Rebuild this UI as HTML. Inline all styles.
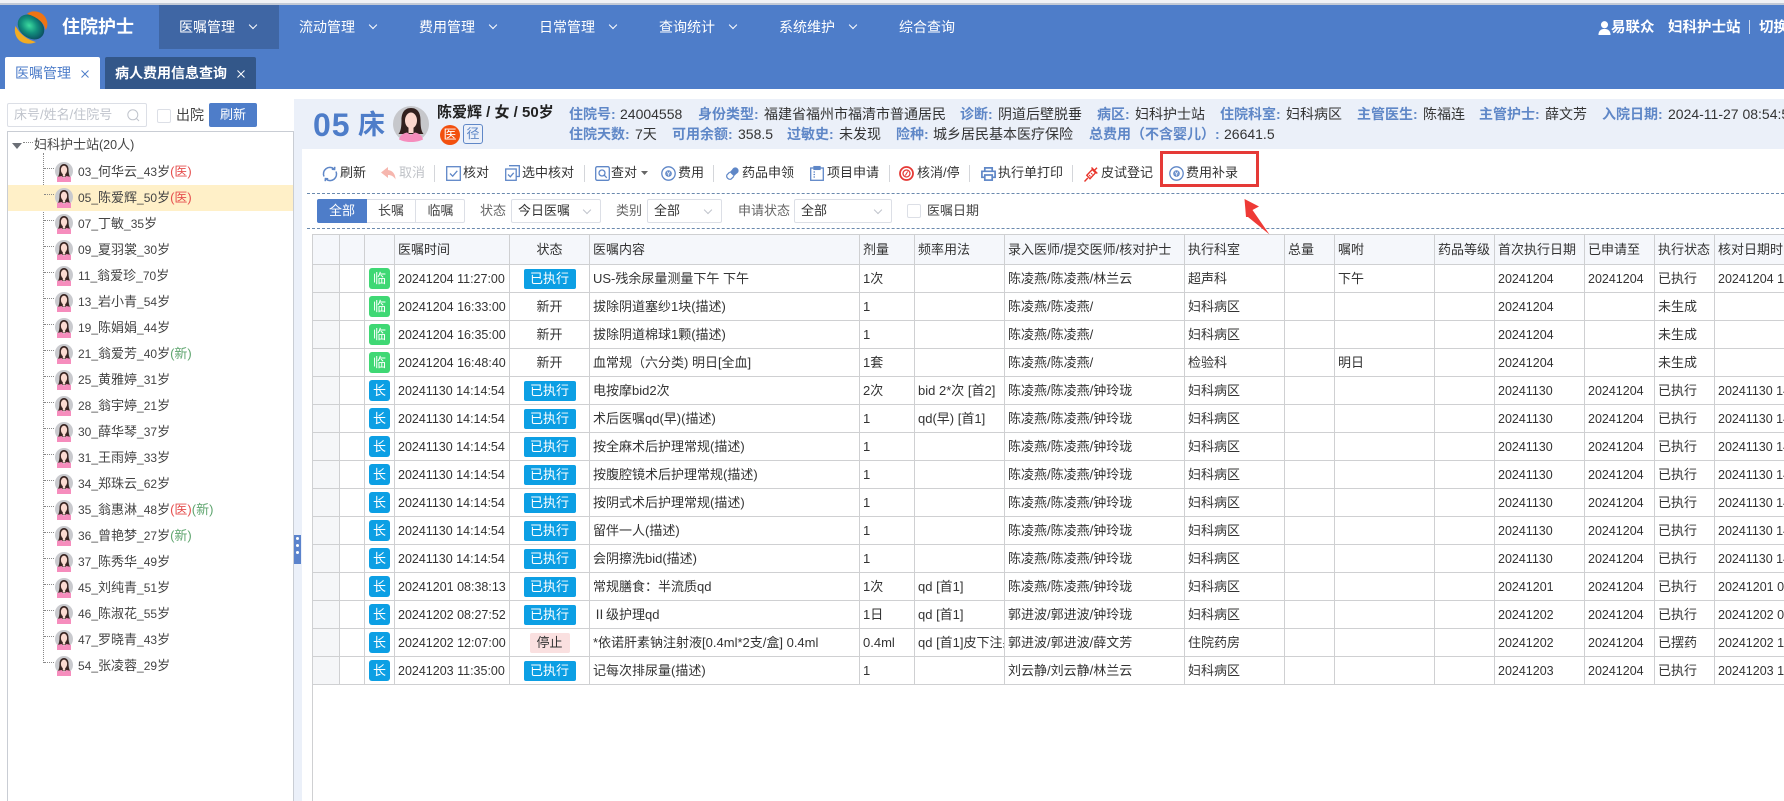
<!DOCTYPE html>
<html lang="zh-CN">
<head>
<meta charset="utf-8">
<title>住院护士</title>
<style>
*{box-sizing:border-box}
html,body{margin:0;padding:0;width:1784px;height:801px;overflow:hidden;background:#fff}
body{font-family:"Liberation Sans","Noto Sans CJK SC",sans-serif;font-size:13px;color:#333;position:relative}
i{font-style:normal}
.a{position:absolute;white-space:nowrap;line-height:20px;height:20px}
.box{position:absolute}
svg{position:absolute;overflow:visible}
.m{color:#fff;font-size:14px;top:17px}
.c{position:absolute;width:6px;height:6px;border-right:1px solid #fff;border-bottom:1px solid #fff;transform:rotate(45deg);top:22px}
.lb{color:#5f87c7;font-weight:bold;font-size:14px}
.v{color:#333;font-size:14px}
.t{color:#333;font-size:13px;top:163px}
.sep{position:absolute;top:165px;height:17px;width:1px;background:#d4d6da}
.sel{position:absolute;top:199px;height:24px;border:1px solid #dcdfe6;border-radius:2px;background:#fff}
.sc{position:absolute;width:6px;height:6px;border-right:1px solid #c0c4cc;border-bottom:1px solid #c0c4cc;transform:rotate(45deg);top:207px}
.g{color:#666;top:201px}
.tree{position:absolute;left:8px;top:159px;width:285px}
.r{height:26px;line-height:26px;padding-left:70px;position:relative;white-space:nowrap;color:#444;font-size:13px}
.r svg{left:47px;top:3px;width:18px;height:20px}
.r:before{content:"";position:absolute;left:36px;width:10px;top:9px;border-top:1px dotted #888}
.r i{font-size:12px}
.hl{background:#fff0c8}
.y{color:#e6504f}
.w{color:#5fa56f}
table{position:absolute;left:312px;top:234px;border-collapse:collapse;table-layout:fixed;width:1522px}
td,th{border:1px solid #cfd0d2;padding:0 0 0 3px;white-space:nowrap;overflow:hidden;font-weight:normal;text-align:left;color:#333;font-size:13px;height:28px;line-height:20px}
thead th{height:30px;background:#f5f7fb}
td.f{background:#f5f6f8}
td.ct,th.ct{text-align:center;padding:0}
td.n{font-size:12.5px}
.tag{display:inline-block;width:21px;height:21px;line-height:21px;border-radius:3px;color:#fff;text-align:center;vertical-align:middle;font-size:13px}
.l{background:#3fd874}
.k{background:#0c9fe4}
.st{display:inline-block;height:20px;line-height:20px;border-radius:2px;text-align:center;vertical-align:middle;font-size:13px}
.e{width:52px;background:#0c9fe4;color:#fff}
.p{width:40px;background:#fae0e0;color:#333}
</style>
</head>
<body>
<svg width="0" height="0" style="position:absolute">
<defs>
<radialGradient id="gs" cx="42%" cy="50%" r="60%"><stop offset="0" stop-color="#3ddc9f"/><stop offset=".5" stop-color="#128f7c"/><stop offset="1" stop-color="#0b4a60"/></radialGradient>
<symbol id="av" viewBox="0 0 18 20">
<circle cx="9" cy="9" r="9" fill="#c9cace"/>
<path d="M9 2C6 2 4.500 4.500 4.500 7.500C4.500 10.500 4 13 3 15L15 15C14 13 13.500 10.500 13.500 7.500C13.500 4.500 12 2 9 2Z" fill="#3a2623"/>
<ellipse cx="9" cy="8" rx="3.100" ry="4.400" fill="#fbdad1"/>
<rect x="7.800" y="11" width="2.400" height="3.500" fill="#fbdad1"/>
<path d="M2 15L6.500 14L9 16L11.500 14L16 15L16 20L2 20Z" fill="#f68dbd"/>
</symbol>
</defs>
</svg>

<!-- top strip and header -->
<div class="box" style="left:0;top:0;width:1784px;height:4px;background:#f1f2f5"></div>
<div class="box" style="left:0;top:3px;width:1784px;height:2px;background:#c3cad6"></div>
<div class="box" style="left:0;top:5px;width:1784px;height:84px;background:#4e7dc9"></div>
<div class="box" style="left:159px;top:5px;width:120px;height:44px;background:#3f66a4"></div>

<!-- logo -->
<svg style="left:14px;top:10px" width="34" height="34" viewBox="0 0 34 34">
<ellipse cx="17" cy="17" rx="14.500" ry="11" fill="url(#gs)" transform="rotate(38 17 17)"/>
<path d="M13 4C17 -.5 30 0 33 11C34 15 33 18 31.500 20C31 14 24 7 13 4Z" fill="#ee7414"/>
<path d="M1.500 16C-1 24 4 33 13 33.500C17 34 20 33 22 32C15 30 7 26 1.500 16Z" fill="#f2ac24"/>
</svg>
<span class="a" style="left:62px;top:17px;color:#fff;font-size:18px;font-weight:bold">住院护士</span>

<!-- menu -->
<span class="a m" style="left:179px">医嘱管理</span><span class="c" style="left:250px"></span>
<span class="a m" style="left:299px">流动管理</span><span class="c" style="left:370px"></span>
<span class="a m" style="left:419px">费用管理</span><span class="c" style="left:490px"></span>
<span class="a m" style="left:539px">日常管理</span><span class="c" style="left:610px"></span>
<span class="a m" style="left:659px">查询统计</span><span class="c" style="left:730px"></span>
<span class="a m" style="left:779px">系统维护</span><span class="c" style="left:850px"></span>
<span class="a m" style="left:899px">综合查询</span>

<!-- user -->
<svg style="left:1598px;top:21px" width="13" height="14" viewBox="0 0 13 15"><circle cx="6.500" cy="4" r="3.800" fill="#fff"/><path d="M0 15C0 10.500 3 8.500 6.500 8.500C10 8.500 13 10.500 13 15Z" fill="#fff"/></svg>
<span class="a" style="left:1611px;top:18px;color:#fff;font-size:14.500px;font-weight:bold">易联众</span>
<span class="a" style="left:1668px;top:18px;color:#fff;font-size:14.500px;font-weight:bold">妇科护士站</span>
<div class="box" style="left:1749px;top:20px;width:1px;height:14px;background:#cfdcf0"></div>
<span class="a" style="left:1759px;top:18px;color:#fff;font-size:14.500px;font-weight:bold">切换</span>

<!-- tabs -->
<div class="box" style="left:5px;top:57px;width:95px;height:32px;background:#fff;border-radius:2px 2px 0 0"></div>
<span class="a" style="left:15px;top:63px;color:#4e7dc9;font-size:14px">医嘱管理</span>
<svg style="left:81px;top:70px" width="8" height="8" viewBox="0 0 8 8"><path d="M.5 .5L7.500 7.500M7.500 .5L.5 7.500" stroke="#4e7dc9" stroke-width="1" fill="none"/></svg>
<div class="box" style="left:105px;top:57px;width:151px;height:32px;background:#335789;border-radius:2px 2px 0 0"></div>
<span class="a" style="left:115px;top:63px;color:#fff;font-size:14px;font-weight:bold">病人费用信息查询</span>
<svg style="left:237px;top:70px" width="8" height="8" viewBox="0 0 8 8"><path d="M.5 .5L7.500 7.500M7.500 .5L.5 7.500" stroke="#fff" stroke-width="1" fill="none"/></svg>

<!-- sidebar top -->
<div class="box" style="left:7px;top:103px;width:140px;height:24px;border:1px solid #dcdfe6;border-radius:2px"></div>
<span class="a" style="left:14px;top:105px;color:#c0c4cc;font-size:13px">床号/姓名/住院号</span>
<svg style="left:127px;top:109px" width="13" height="13" viewBox="0 0 13 13"><circle cx="5.800" cy="5.800" r="5" fill="none" stroke="#c0c4cc"/><path d="M9.500 9.500L12 12" stroke="#c0c4cc"/></svg>
<div class="box" style="left:157px;top:109px;width:14px;height:14px;border:1px solid #dcdfe6;border-radius:2px"></div>
<span class="a" style="left:176px;top:105px;font-size:14px;color:#444">出院</span>
<div class="box" style="left:209px;top:103px;width:48px;height:24px;background:#4e7dc9;border-radius:2px;color:#fff;text-align:center;line-height:23px;font-size:13px">刷新</div>

<!-- tree box -->
<div class="box" style="left:7px;top:131px;width:287px;height:680px;border:1px solid #c9cdd4"></div>
<svg style="left:12px;top:143px" width="10" height="6" viewBox="0 0 10 6"><path d="M0 0L10 0L5 6Z" fill="#6b6f76"/></svg>
<div class="box" style="left:23px;top:142px;width:10px;border-top:1px dotted #888"></div>
<span class="a" style="left:34px;top:135px;color:#444;font-size:13px">妇科护士站<i style="font-size:12.5px">(20</i>人<i style="font-size:12.5px">)</i></span>
<div class="box" style="left:43px;top:153px;height:510px;border-left:1px dotted #888"></div>

<div class="tree">
<div class="r"><svg><use href="#av"/></svg><i>03_</i>何华云<i>_43</i>岁<span class="y">(医)</span></div>
<div class="r hl"><svg><use href="#av"/></svg><i>05_</i>陈爱辉<i>_50</i>岁<span class="y">(医)</span></div>
<div class="r"><svg><use href="#av"/></svg><i>07_</i>丁敏<i>_35</i>岁</div>
<div class="r"><svg><use href="#av"/></svg><i>09_</i>夏羽裳<i>_30</i>岁</div>
<div class="r"><svg><use href="#av"/></svg><i>11_</i>翁爱珍<i>_70</i>岁</div>
<div class="r"><svg><use href="#av"/></svg><i>13_</i>岩小青<i>_54</i>岁</div>
<div class="r"><svg><use href="#av"/></svg><i>19_</i>陈娟娟<i>_44</i>岁</div>
<div class="r"><svg><use href="#av"/></svg><i>21_</i>翁爱芳<i>_40</i>岁<span class="w">(新)</span></div>
<div class="r"><svg><use href="#av"/></svg><i>25_</i>黄雅婷<i>_31</i>岁</div>
<div class="r"><svg><use href="#av"/></svg><i>28_</i>翁宇婷<i>_21</i>岁</div>
<div class="r"><svg><use href="#av"/></svg><i>30_</i>薛华琴<i>_37</i>岁</div>
<div class="r"><svg><use href="#av"/></svg><i>31_</i>王雨婷<i>_33</i>岁</div>
<div class="r"><svg><use href="#av"/></svg><i>34_</i>郑珠云<i>_62</i>岁</div>
<div class="r"><svg><use href="#av"/></svg><i>35_</i>翁惠淋<i>_48</i>岁<span class="y">(医)</span><span class="w">(新)</span></div>
<div class="r"><svg><use href="#av"/></svg><i>36_</i>曾艳梦<i>_27</i>岁<span class="w">(新)</span></div>
<div class="r"><svg><use href="#av"/></svg><i>37_</i>陈秀华<i>_49</i>岁</div>
<div class="r"><svg><use href="#av"/></svg><i>45_</i>刘纯青<i>_51</i>岁</div>
<div class="r"><svg><use href="#av"/></svg><i>46_</i>陈淑花<i>_55</i>岁</div>
<div class="r"><svg><use href="#av"/></svg><i>47_</i>罗晓青<i>_43</i>岁</div>
<div class="r"><svg><use href="#av"/></svg><i>54_</i>张凌蓉<i>_29</i>岁</div>
</div>

<!-- splitter -->
<div class="box" style="left:294px;top:99px;width:8px;height:702px;background:#ebf0f9"></div>
<div class="box" style="left:294px;top:535px;width:7px;height:29px;background:#5b83cc"></div>
<div class="box" style="left:296px;top:537px;width:3px;height:3px;border-radius:50%;background:#fff"></div>
<div class="box" style="left:296px;top:544px;width:3px;height:3px;border-radius:50%;background:#fff"></div>
<div class="box" style="left:296px;top:551px;width:3px;height:3px;border-radius:50%;background:#fff"></div>

<!-- patient header -->
<div class="box" style="left:302px;top:99px;width:1482px;height:50px;background:#ebf0f9"></div>
<span class="a" style="left:313px;top:110px;height:30px;line-height:30px;color:#4e7dc9;font-size:32px;font-weight:bold;letter-spacing:1px">05</span>
<span class="a" style="left:358px;top:110px;height:30px;line-height:30px;color:#4e7dc9;font-size:27px;font-weight:bold">床</span>
<svg style="left:393px;top:106px" width="36" height="36" viewBox="0 0 36 36">
<circle cx="18" cy="18" r="18" fill="#c6c7cb"/>
<path d="M18 2C11 2 8.500 7.500 8.500 14C8.500 20 8 25 5.500 28L30.500 28C28 25 27.500 20 27.500 14C27.500 7.500 25 2 18 2Z" fill="#32201e"/>
<ellipse cx="18" cy="14.500" rx="6" ry="8" fill="#fcd6cd"/>
<rect x="15.500" y="20" width="5" height="7" fill="#fcd6cd"/>
<path d="M6 33.500C7 29 10 27.500 14 26.500L18 29L22 26.500C26 27.500 29 29 30 33.500C27 35 22.500 36 18 36C13.500 36 9 35 6 33.500Z" fill="#f68dbd"/>
</svg>
<span class="a" style="left:437px;top:103px;font-size:15px;font-weight:bold;color:#222">陈爱辉 / 女 / 50岁</span>
<div class="box" style="left:440px;top:125px;width:20px;height:20px;border-radius:50%;background:#f2500f;color:#fff;text-align:center;line-height:19px;font-size:13px">医</div>
<div class="box" style="left:463px;top:124px;width:20px;height:20px;border:1px solid #5f87c7;border-radius:3px;color:#5f87c7;text-align:center;line-height:18px;font-size:13px">径</div>

<span class="a lb" style="left:569px;top:104px">住院号:</span><span class="a v" style="left:620px;top:104px">24004558</span>
<span class="a lb" style="left:698px;top:104px">身份类型:</span><span class="a v" style="left:764px;top:104px">福建省福州市福清市普通居民</span>
<span class="a lb" style="left:960px;top:104px">诊断:</span><span class="a v" style="left:998px;top:104px">阴道后壁脱垂</span>
<span class="a lb" style="left:1097px;top:104px">病区:</span><span class="a v" style="left:1135px;top:104px">妇科护士站</span>
<span class="a lb" style="left:1220px;top:104px">住院科室:</span><span class="a v" style="left:1286px;top:104px">妇科病区</span>
<span class="a lb" style="left:1357px;top:104px">主管医生:</span><span class="a v" style="left:1423px;top:104px">陈福连</span>
<span class="a lb" style="left:1479px;top:104px">主管护士:</span><span class="a v" style="left:1545px;top:104px">薛文芳</span>
<span class="a lb" style="left:1602px;top:104px">入院日期:</span><span class="a v" style="left:1668px;top:104px">2024-11-27 08:54:58</span>

<span class="a lb" style="left:569px;top:124px">住院天数:</span><span class="a v" style="left:635px;top:124px">7天</span>
<span class="a lb" style="left:672px;top:124px">可用余额:</span><span class="a v" style="left:738px;top:124px">358.5</span>
<span class="a lb" style="left:787px;top:124px">过敏史:</span><span class="a v" style="left:839px;top:124px">未发现</span>
<span class="a lb" style="left:896px;top:124px">险种:</span><span class="a v" style="left:933px;top:124px">城乡居民基本医疗保险</span>
<span class="a lb" style="left:1089px;top:124px">总费用（不含婴儿）:</span><span class="a v" style="left:1224px;top:124px">26641.5</span>

<!-- toolbar -->
<svg style="left:322px;top:166px" width="16" height="16" viewBox="0 0 16 16" fill="none" stroke="#5f87c7" stroke-width="1.500"><path d="M2 10.500A6.500 6.500 0 0 1 12 2.800"/><path d="M14 5.500A6.500 6.500 0 0 1 4 13.200"/><path d="M12.800 .8L12.600 3.500L9.800 3.300"/><path d="M3.200 15.200L3.400 12.500L6.200 12.700"/></svg>
<span class="a t" style="left:340px">刷新</span>
<svg style="left:381px;top:167px" width="15" height="13" viewBox="0 0 15 13"><path d="M7 0L0 5.500L7 11L7 8C10 8 12.500 9 14.500 12.500C14.500 7 11.500 3.500 7 3Z" fill="#f6b6ae"/></svg>
<span class="a t" style="left:399px;color:#bfc2c7">取消</span>
<div class="sep" style="left:434px"></div>
<svg style="left:446px;top:166px" width="15" height="15" viewBox="0 0 15 15" fill="none" stroke="#5f87c7" stroke-width="1.300"><rect x=".7" y=".7" width="13.600" height="13.600"/><path d="M4 7.500L6.700 10.200L11.300 4.800"/></svg>
<span class="a t" style="left:463px">核对</span>
<svg style="left:505px;top:165px" width="15" height="16" viewBox="0 0 15 16" fill="none" stroke="#5f87c7" stroke-width="1.300"><rect x=".7" y="4" width="10.500" height="11.300"/><path d="M4 .7H14.300V11.500H11.200"/><path d="M3 9.500L5.300 11.800L8.700 7.800"/></svg>
<span class="a t" style="left:522px">选中核对</span>
<div class="sep" style="left:584px"></div>
<svg style="left:595px;top:166px" width="15" height="15" viewBox="0 0 15 15" fill="none" stroke="#5f87c7" stroke-width="1.300"><rect x=".7" y=".7" width="13.600" height="13.600" rx="1.500"/><circle cx="7" cy="7" r="3"/><path d="M9.200 9.200L11.800 11.800"/></svg>
<span class="a t" style="left:611px">查对</span>
<svg style="left:641px;top:171px" width="7" height="4" viewBox="0 0 7 4"><path d="M0 0L7 0L3.500 4Z" fill="#666"/></svg>
<svg style="left:661px;top:166px" width="15" height="15" viewBox="0 0 15 15"><circle cx="7.500" cy="7.500" r="6.700" fill="none" stroke="#5f87c7" stroke-width="1.300"/><circle cx="7.500" cy="7.500" r="3.300" fill="#5f87c7"/><path d="M5.800 5.500L7.500 7.500L9.200 5.500M5.500 8H9.500M7.500 7.500V10" stroke="#fff" stroke-width=".6" fill="none"/></svg>
<span class="a t" style="left:678px">费用</span>
<div class="sep" style="left:713px"></div>
<svg style="left:725px;top:167px" width="14" height="14" viewBox="0 0 14 14"><path d="M9 .8L13.200 5L8.600 9.600L4.400 5.400Z" fill="#5f87c7"/><circle cx="10.300" cy="3.700" r="3.300" fill="#5f87c7"/><path d="M4.700 5.100L1.900 7.900A3.300 3.300 0 0 0 6.100 12.100L8.900 9.300" fill="#fff" stroke="#5f87c7" stroke-width="1.200"/></svg>
<span class="a t" style="left:742px">药品申领</span>
<svg style="left:810px;top:166px" width="14" height="15" viewBox="0 0 14 15" fill="none" stroke="#5f87c7" stroke-width="1.300"><rect x=".7" y="2" width="12.600" height="12.300"/><rect x="4" y=".6" width="6" height="2.800" fill="#5f87c7"/><path d="M3.500 6H5M3.500 8.500H5M3.500 11H5"/></svg>
<span class="a t" style="left:827px">项目申请</span>
<div class="sep" style="left:889px"></div>
<svg style="left:899px;top:166px" width="15" height="15" viewBox="0 0 15 15" fill="none" stroke="#e53935"><circle cx="7.500" cy="7.500" r="6.500" stroke-width="1.800"/><circle cx="7.500" cy="7.500" r="3.500" stroke-width="1.300"/><path d="M8.700 5.500L6.300 9.500" stroke-width="1"/></svg>
<span class="a t" style="left:917px">核消/停</span>
<div class="sep" style="left:969px"></div>
<svg style="left:981px;top:167px" width="15" height="14" viewBox="0 0 15 14" fill="none" stroke="#5f87c7" stroke-width="1.700"><path d="M3.800 4V.9H11.200V4"/><path d="M3.300 10.300H.9V4.300H14.100V10.300H11.700"/><rect x="3.800" y="8" width="7.400" height="5.100"/></svg>
<span class="a t" style="left:998px">执行单打印</span>
<div class="sep" style="left:1072px"></div>
<svg style="left:1084px;top:166px" width="15" height="16" viewBox="0 0 15 16" fill="none" stroke="#e8352b" stroke-width="1.400"><path d="M.5 15.500L3.800 12"/><path d="M2.800 9.300L6 12.700L11.500 6.800L8.300 3.500Z"/><path d="M7.500 1.500L13.300 7.500M10.500 4.300L13 1.800"/><path d="M5 9L6.500 10.500M7 7L8.500 8.500" stroke-width="1"/></svg>
<span class="a t" style="left:1101px">皮试登记</span>
<svg style="left:1169px;top:166px" width="15" height="15" viewBox="0 0 15 15"><circle cx="7.500" cy="7.500" r="6.700" fill="none" stroke="#5f87c7" stroke-width="1.300"/><circle cx="7.500" cy="7.500" r="3.300" fill="#5f87c7"/><path d="M5.800 5.500L7.500 7.500L9.200 5.500M5.500 8H9.500M7.500 7.500V10" stroke="#fff" stroke-width=".6" fill="none"/></svg>
<span class="a t" style="left:1186px">费用补录</span>
<div class="box" style="left:1160px;top:151px;width:99px;height:36px;border:3px solid #e53a37"></div>

<!-- dashed -->
<div class="box" style="left:307px;top:193px;width:1477px;border-top:1px dashed #6b8aae"></div>
<div class="box" style="left:307px;top:228px;width:1477px;border-top:1px dashed #6b8aae"></div>

<!-- filter -->
<div class="box" style="left:317px;top:199px;width:148px;height:24px;border:1px solid #dcdfe6;border-radius:2px"></div>
<div class="box" style="left:317px;top:199px;width:50px;height:24px;background:#4e7dc9;border-radius:2px 0 0 2px;color:#fff;text-align:center;line-height:24px">全部</div>
<div class="box" style="left:367px;top:199px;width:48px;height:24px;text-align:center;line-height:24px;color:#444">长嘱</div>
<div class="box" style="left:415px;top:200px;width:1px;height:22px;background:#dcdfe6"></div>
<div class="box" style="left:416px;top:199px;width:49px;height:24px;text-align:center;line-height:24px;color:#444">临嘱</div>
<span class="a g" style="left:480px">状态</span>
<div class="sel" style="left:511px;width:90px"></div><span class="a" style="left:518px;top:201px">今日医嘱</span><span class="sc" style="left:584px"></span>
<span class="a g" style="left:616px">类别</span>
<div class="sel" style="left:647px;width:75px"></div><span class="a" style="left:654px;top:201px">全部</span><span class="sc" style="left:705px"></span>
<span class="a g" style="left:738px">申请状态</span>
<div class="sel" style="left:794px;width:98px"></div><span class="a" style="left:801px;top:201px">全部</span><span class="sc" style="left:875px"></span>
<div class="box" style="left:907px;top:204px;width:14px;height:14px;border:1px solid #dcdfe6;border-radius:2px"></div>
<span class="a" style="left:927px;top:201px;color:#444">医嘱日期</span>

<!-- table -->
<div class="box" style="left:312px;top:234px;width:1px;height:567px;background:#cfd0d2"></div>
<table>
<colgroup><col style="width:27px"><col style="width:25px"><col style="width:30px"><col style="width:115px"><col style="width:80px"><col style="width:270px"><col style="width:55px"><col style="width:90px"><col style="width:180px"><col style="width:100px"><col style="width:50px"><col style="width:100px"><col style="width:60px"><col style="width:90px"><col style="width:70px"><col style="width:60px"><col style="width:120px"></colgroup>
<thead><tr><th></th><th></th><th></th><th>医嘱时间</th><th class="ct">状态</th><th>医嘱内容</th><th>剂量</th><th>频率用法</th><th>录入医师/提交医师/核对护士</th><th>执行科室</th><th>总量</th><th>嘱咐</th><th>药品等级</th><th>首次执行日期</th><th>已申请至</th><th>执行状态</th><th>核对日期时间</th></tr></thead>
<tbody>
<tr><td class="f"></td><td></td><td class="ct"><span class="tag l">临</span></td><td class="n">20241204 11:27:00</td><td class="ct"><span class="st e">已执行</span></td><td>US-残余尿量测量下午 下午</td><td>1次</td><td></td><td>陈凌燕/陈凌燕/林兰云</td><td>超声科</td><td></td><td>下午</td><td></td><td class="n">20241204</td><td class="n">20241204</td><td>已执行</td><td class="n">20241204 11:27:00</td></tr>
<tr><td class="f"></td><td></td><td class="ct"><span class="tag l">临</span></td><td class="n">20241204 16:33:00</td><td class="ct">新开</td><td>拔除阴道塞纱1块(描述)</td><td>1</td><td></td><td>陈凌燕/陈凌燕/</td><td>妇科病区</td><td></td><td></td><td></td><td class="n">20241204</td><td></td><td>未生成</td><td></td></tr>
<tr><td class="f"></td><td></td><td class="ct"><span class="tag l">临</span></td><td class="n">20241204 16:35:00</td><td class="ct">新开</td><td>拔除阴道棉球1颗(描述)</td><td>1</td><td></td><td>陈凌燕/陈凌燕/</td><td>妇科病区</td><td></td><td></td><td></td><td class="n">20241204</td><td></td><td>未生成</td><td></td></tr>
<tr><td class="f"></td><td></td><td class="ct"><span class="tag l">临</span></td><td class="n">20241204 16:48:40</td><td class="ct">新开</td><td>血常规（六分类) 明日[全血]</td><td>1套</td><td></td><td>陈凌燕/陈凌燕/</td><td>检验科</td><td></td><td>明日</td><td></td><td class="n">20241204</td><td></td><td>未生成</td><td></td></tr>
<tr><td class="f"></td><td></td><td class="ct"><span class="tag k">长</span></td><td class="n">20241130 14:14:54</td><td class="ct"><span class="st e">已执行</span></td><td>电按摩bid2次</td><td>2次</td><td>bid 2*次 [首2]</td><td>陈凌燕/陈凌燕/钟玲珑</td><td>妇科病区</td><td></td><td></td><td></td><td class="n">20241130</td><td class="n">20241204</td><td>已执行</td><td class="n">20241130 14:14:54</td></tr>
<tr><td class="f"></td><td></td><td class="ct"><span class="tag k">长</span></td><td class="n">20241130 14:14:54</td><td class="ct"><span class="st e">已执行</span></td><td>术后医嘱qd(早)(描述)</td><td>1</td><td>qd(早) [首1]</td><td>陈凌燕/陈凌燕/钟玲珑</td><td>妇科病区</td><td></td><td></td><td></td><td class="n">20241130</td><td class="n">20241204</td><td>已执行</td><td class="n">20241130 14:14:54</td></tr>
<tr><td class="f"></td><td></td><td class="ct"><span class="tag k">长</span></td><td class="n">20241130 14:14:54</td><td class="ct"><span class="st e">已执行</span></td><td>按全麻术后护理常规(描述)</td><td>1</td><td></td><td>陈凌燕/陈凌燕/钟玲珑</td><td>妇科病区</td><td></td><td></td><td></td><td class="n">20241130</td><td class="n">20241204</td><td>已执行</td><td class="n">20241130 14:14:54</td></tr>
<tr><td class="f"></td><td></td><td class="ct"><span class="tag k">长</span></td><td class="n">20241130 14:14:54</td><td class="ct"><span class="st e">已执行</span></td><td>按腹腔镜术后护理常规(描述)</td><td>1</td><td></td><td>陈凌燕/陈凌燕/钟玲珑</td><td>妇科病区</td><td></td><td></td><td></td><td class="n">20241130</td><td class="n">20241204</td><td>已执行</td><td class="n">20241130 14:14:54</td></tr>
<tr><td class="f"></td><td></td><td class="ct"><span class="tag k">长</span></td><td class="n">20241130 14:14:54</td><td class="ct"><span class="st e">已执行</span></td><td>按阴式术后护理常规(描述)</td><td>1</td><td></td><td>陈凌燕/陈凌燕/钟玲珑</td><td>妇科病区</td><td></td><td></td><td></td><td class="n">20241130</td><td class="n">20241204</td><td>已执行</td><td class="n">20241130 14:14:54</td></tr>
<tr><td class="f"></td><td></td><td class="ct"><span class="tag k">长</span></td><td class="n">20241130 14:14:54</td><td class="ct"><span class="st e">已执行</span></td><td>留伴一人(描述)</td><td>1</td><td></td><td>陈凌燕/陈凌燕/钟玲珑</td><td>妇科病区</td><td></td><td></td><td></td><td class="n">20241130</td><td class="n">20241204</td><td>已执行</td><td class="n">20241130 14:14:54</td></tr>
<tr><td class="f"></td><td></td><td class="ct"><span class="tag k">长</span></td><td class="n">20241130 14:14:54</td><td class="ct"><span class="st e">已执行</span></td><td>会阴擦洗bid(描述)</td><td>1</td><td></td><td>陈凌燕/陈凌燕/钟玲珑</td><td>妇科病区</td><td></td><td></td><td></td><td class="n">20241130</td><td class="n">20241204</td><td>已执行</td><td class="n">20241130 14:14:54</td></tr>
<tr><td class="f"></td><td></td><td class="ct"><span class="tag k">长</span></td><td class="n">20241201 08:38:13</td><td class="ct"><span class="st e">已执行</span></td><td>常规膳食：半流质qd</td><td>1次</td><td>qd [首1]</td><td>陈凌燕/陈凌燕/钟玲珑</td><td>妇科病区</td><td></td><td></td><td></td><td class="n">20241201</td><td class="n">20241204</td><td>已执行</td><td class="n">20241201 08:38:13</td></tr>
<tr><td class="f"></td><td></td><td class="ct"><span class="tag k">长</span></td><td class="n">20241202 08:27:52</td><td class="ct"><span class="st e">已执行</span></td><td>Ⅱ级护理qd</td><td>1日</td><td>qd [首1]</td><td>郭进波/郭进波/钟玲珑</td><td>妇科病区</td><td></td><td></td><td></td><td class="n">20241202</td><td class="n">20241204</td><td>已执行</td><td class="n">20241202 08:27:52</td></tr>
<tr><td class="f"></td><td></td><td class="ct"><span class="tag k">长</span></td><td class="n">20241202 12:07:00</td><td class="ct"><span class="st p">停止</span></td><td>*依诺肝素钠注射液[0.4ml*2支/盒] 0.4ml</td><td>0.4ml</td><td>qd [首1]皮下注射</td><td>郭进波/郭进波/薛文芳</td><td>住院药房</td><td></td><td></td><td></td><td class="n">20241202</td><td class="n">20241204</td><td>已摆药</td><td class="n">20241202 12:07:00</td></tr>
<tr><td class="f"></td><td></td><td class="ct"><span class="tag k">长</span></td><td class="n">20241203 11:35:00</td><td class="ct"><span class="st e">已执行</span></td><td>记每次排尿量(描述)</td><td>1</td><td></td><td>刘云静/刘云静/林兰云</td><td>妇科病区</td><td></td><td></td><td></td><td class="n">20241203</td><td class="n">20241204</td><td>已执行</td><td class="n">20241203 11:35:00</td></tr>
</tbody>
</table>

<!-- arrow -->
<svg style="left:1240px;top:195px" width="36" height="44" viewBox="0 0 36 44"><path d="M4.500 4L19 11.500L12.500 15L29.500 39.500L8 22L6 22Z" fill="#ee3a36"/></svg>
</body>
</html>
